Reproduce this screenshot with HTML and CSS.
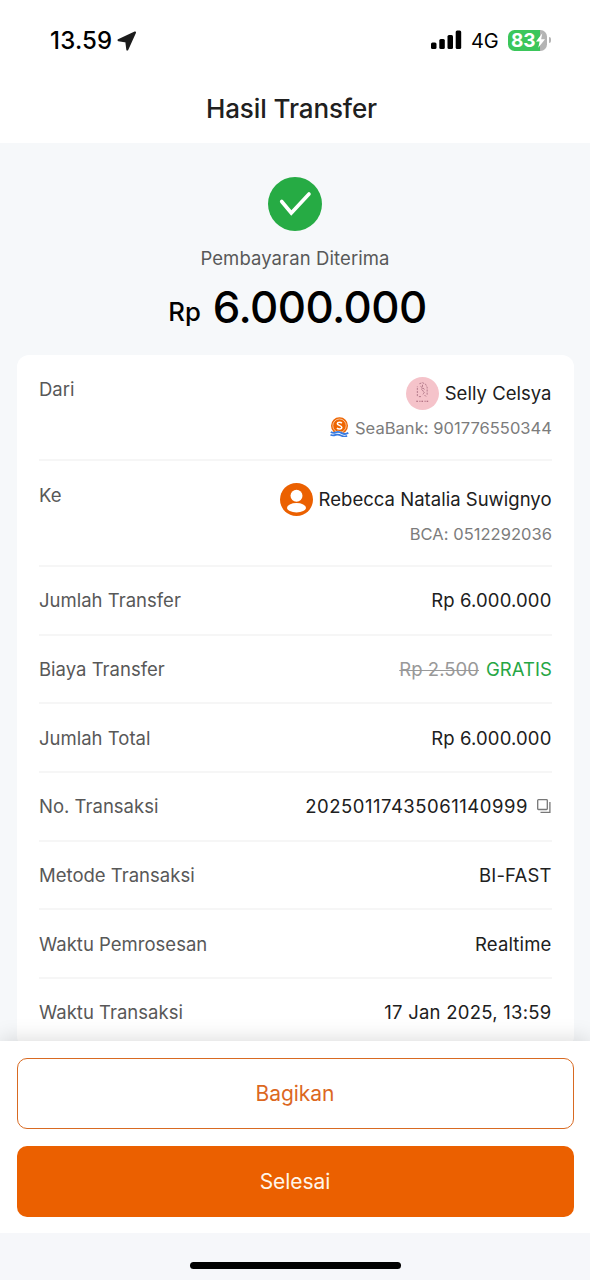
FILE: index.html
```html
<!DOCTYPE html>
<html lang="id">
<head>
<meta charset="utf-8">
<title>Hasil Transfer</title>
<link rel="stylesheet" href="styles.css">
</head>
<body>
<div class="screen">
  <header class="header">
    <div class="status">
      <div class="status-left">
        <span class="clock">13.59</span>
        <svg class="location" viewBox="0 0 20 20"><path d="M18 1.500 1.500 9.200 9.300 10.600 10.300 18.500z" fill="#1c1c1c" stroke="#1c1c1c" stroke-width="2" stroke-linejoin="round"/></svg>
      </div>
      <div class="status-right">
        <svg class="signal" viewBox="0 0 31 20"><rect x="0" y="12.500" width="5.500" height="6.500" rx="1.500"/><rect x="8.300" y="9" width="5.500" height="10" rx="1.500"/><rect x="16.500" y="5" width="5.500" height="14" rx="1.500"/><rect x="24.700" y="0.500" width="5.500" height="18.500" rx="1.500"/></svg>
        <span class="network">4G</span>
        <div class="battery"><span class="battery-level">83</span><svg class="bolt" viewBox="0 0 10 16"><path d="M7 0 0 9h4L2.500 16 10 6.500H5.700z" fill="#fff"/></svg></div>
        <span class="battery-tip"></span>
      </div>
    </div>
    <h1 class="title">Hasil Transfer</h1>
  </header>
  <main class="content">
    <section class="summary">
      <svg class="success" viewBox="0 0 54 54"><circle cx="27" cy="27" r="27" fill="#26ab44"/><path d="M13.700 24.500 23.300 36 41 17" fill="none" stroke="#fff" stroke-width="3.600" stroke-linecap="round"/></svg>
      <p class="caption">Pembayaran Diterima</p>
      <p class="amount"><span class="currency">Rp</span><span class="figure">6.000.000</span></p>
    </section>
    <section class="card">
      <div class="row party">
        <span class="label">Dari</span>
        <div class="party-info">
          <div class="person">
            <svg class="avatar" viewBox="0 0 32 32"><circle cx="16" cy="16" r="16" fill="#f5c3ca"/><g fill="none" stroke="#a66c7e" stroke-width=".8" stroke-dasharray="2 1"><path d="M11 18.500V9M13 6.500l3-1 3 1.500 1.500 3v8M12.500 19h3M18 17.500l2 2"/><path d="M16 7.500v3l-1 2 3 2-2 3M14 9l4 3"/></g><path d="M10 23.500h13" stroke="#a05b70" stroke-width="1" stroke-dasharray="1.500 1.500 1 1"/></svg>
            <span class="name">Selly Celsya</span>
          </div>
          <div class="account">
            <svg class="bank" viewBox="0 0 18 20"><circle cx="9" cy="8.700" r="8.500" fill="#ee6500"/><circle cx="9" cy="8.700" r="6.700" fill="none" stroke="#fff" stroke-width=".6"/><path d="M11.300 6.200C10.500 5.100 7 4.800 6.800 6.800c-.1 1.700 4.500 1.500 4.500 3.500 0 2.200-3.700 2-4.900.7" fill="none" stroke="#fff" stroke-width="1.500"/><path d="M0 13.800q2.500 2.300 5 .7t6 .5 7-.3v3.500q-3 1.800-6.500.3T5 18.200t-5-.5z" fill="#fff"/><path d="M.3 14.900q2.500 1.700 5 .5t6 .7 6.500-.3M0 17.700q2.500 1.200 5 .2t6 .8 5.500 0" fill="none" stroke="#397be0" stroke-width="1.800"/></svg>
            <span class="number">SeaBank: 901776550344</span>
          </div>
        </div>
      </div>
      <div class="row party">
        <span class="label">Ke</span>
        <div class="party-info">
          <div class="person">
            <svg class="avatar" viewBox="0 0 32 32"><circle cx="16" cy="16" r="16" fill="#eb6000"/><circle cx="16" cy="12.300" r="5.800" fill="#fff"/><ellipse cx="16" cy="24" rx="9.200" ry="4.600" fill="#fff"/></svg>
            <span class="name">Rebecca Natalia Suwignyo</span>
          </div>
          <div class="account"><span class="number">BCA: 0512292036</span></div>
        </div>
      </div>
      <div class="row"><span class="label">Jumlah Transfer</span><span class="value money">Rp 6.000.000</span></div>
      <div class="row"><span class="label">Biaya Transfer</span><span class="value fee"><s class="old-fee">Rp 2.500</s><span class="free">GRATIS</span></span></div>
      <div class="row"><span class="label">Jumlah Total</span><span class="value money">Rp 6.000.000</span></div>
      <div class="row"><span class="label">No. Transaksi</span><span class="value reference"><span class="ref-number">20250117435061140999</span><svg class="copy" viewBox="0 0 14 14"><rect x=".7" y=".7" width="9.600" height="9.800" rx=".8" fill="none" stroke="#777" stroke-width="1.300"/><path d="M12.900 3v10.300H3.500" fill="none" stroke="#777" stroke-width="1.300"/></svg></span></div>
      <div class="row"><span class="label">Metode Transaksi</span><span class="value method">BI-FAST</span></div>
      <div class="row"><span class="label">Waktu Pemrosesan</span><span class="value">Realtime</span></div>
      <div class="row"><span class="label">Waktu Transaksi</span><span class="value date">17 Jan 2025, 13:59</span></div>
    </section>
  </main>
  <footer class="actions">
    <button class="button outline">Bagikan</button>
    <button class="button solid">Selesai</button>
  </footer>
  <div class="home"><span class="home-bar"></span></div>
</div>
</body>
</html>
```
FILE: styles.css
```css
* { box-sizing: border-box; }
body { margin: 0; font-family: Inter, "Liberation Sans", sans-serif; color: #202020; }
.screen { width: 590px; height: 1280px; display: flex; flex-direction: column; overflow: hidden; background: #f6f8fa; }
.header { height: 143px; flex: none; background: #fff; }
.status { height: 82px; display: flex; justify-content: space-between; padding: 0 39px 0 50px; }
.status-left, .status-right { display: flex; align-items: center; height: 80px; }
.status-left { height: 81px; }
.clock { font-size: 24px; font-weight: 550; color: #000; letter-spacing: 0.2px; }
.location { width: 20px; height: 20px; margin-left: 5px; }
.signal { width: 31px; height: 20px; margin-right: 9px; }
.network { font-size: 20px; color: #000; width: 37px; letter-spacing: -0.1px; padding-top: 1px; }
.battery { display: flex; align-items: center; width: 39px; height: 21px; border-radius: 6.5px; background: linear-gradient(90deg, #3bc65b 83%, #b4b4b4 83%); padding-left: 3px; }
.battery-level { color: #fff; font-size: 19px; font-weight: 650; line-height: 21px; }
.bolt { width: 9px; height: 15px; flex: none; }
.battery-tip { width: 2px; height: 6px; border-radius: 0 2px 2px 0; background: #b4b4b4; margin-left: 2px; }
.title { margin: 11px 0 0; padding-right: 7px; text-align: center; font-size: 26px; line-height: 32px; font-weight: 450; letter-spacing: -0.1px; }
.content { height: 898px; flex: none; overflow: hidden; }
.summary { height: 212px; padding-top: 33.5px; display: flex; flex-direction: column; align-items: center; }
.success { width: 54px; height: 54px; flex: none; }
.caption { margin: 14.5px 0 0; font-size: 18.5px; line-height: 26px; color: #585858; letter-spacing: 0.1px; }
.amount { margin: 10px 0 0; display: flex; align-items: baseline; gap: 12px; color: #000; line-height: 54px; padding-left: 5px; }
.currency { font-size: 25.7px; font-weight: 500; transform: translateY(-2px); }
.figure { font-size: 43.8px; font-weight: 500; letter-spacing: -0.55px; }
.card { margin: 0 16px 0 17px; padding: 0 22px; background: #fff; border-radius: 12px; }
.row { height: 68.7px; display: flex; justify-content: space-between; align-items: center; border-bottom: 2px solid #f6f6f6; font-size: 18.5px; line-height: 26px; }
.row:last-child { border-bottom: 0; padding-bottom: 2px; }
.label { color: #585858; letter-spacing: 0.01px; }
.value { display: flex; align-items: center; letter-spacing: 0.15px; padding-right: 0.5px; }
.party { height: 106px; align-items: flex-start; padding-top: 21px; }
.party .label { margin-top: -0.5px; }
.party-info { display: flex; flex-direction: column; align-items: flex-end; }
.person { display: flex; align-items: center; gap: 6px; height: 34px; padding-right: 0.5px; }
.name { letter-spacing: 0.02px; }
.avatar { width: 33px; height: 33px; }
.account { display: flex; align-items: center; gap: 6px; height: 35px; color: #7c7c7c; font-size: 16.5px; letter-spacing: 0.04px; }
.bank { width: 19px; height: 20px; margin-bottom: 2px; }
.fee { gap: 7px; letter-spacing: 0.05px; padding: 0 0 1px; }
.old-fee { color: #999; text-decoration-thickness: 1px; }
.free { color: #26a644; }
.reference { gap: 9px; padding-right: 1px; }
.ref-number { letter-spacing: 0.52px; }
.date { letter-spacing: 0.25px; }
.copy { width: 14px; height: 14px; }
.actions { height: 192px; flex: none; padding: 17px 16px 16px 17px; background: #fff; display: flex; flex-direction: column; gap: 17px; box-shadow: 0 -2px 20px rgba(0, 0, 0, .14); position: relative; }
.button { height: 71px; border-radius: 10px; font: 400 21px Inter, "Liberation Sans", sans-serif; padding: 0 1px 0 0; letter-spacing: -0.05px; }
.outline { background: #fff; border: 1px solid #d86a22; color: #dc681f; }
.solid { background: #eb6000; border: 0; color: #fff5e9; }
.home { flex: 1; display: flex; justify-content: center; align-items: flex-start; padding-top: 29px; background: #f6f7fa; position: relative; }
.home-bar { width: 211px; height: 7px; border-radius: 4px; background: #000; }
```
